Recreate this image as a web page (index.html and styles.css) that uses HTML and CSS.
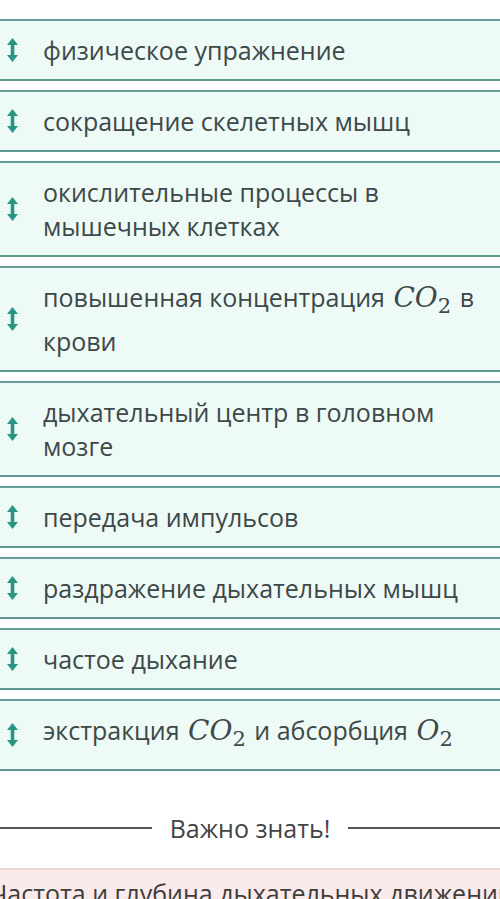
FILE: index.html
```html
<!DOCTYPE html>
<html lang="ru">
<head>
  <meta charset="UTF-8">
  <meta name="viewport" content="width=device-width, initial-scale=1.0">
  <title>Последовательность</title>
  <link rel="stylesheet" href="styles.css">
</head>
<body>
  <div class="order-list">
    <div class="order-item">
      <span class="handle"><svg width="11" height="24" viewBox="0 0 11 24"><path d="M5.5 0 L11 7 H7.3 V17 H11 L5.5 24 L0 17 H3.7 V7 H0 Z"/></svg></span>
      <span class="label">физическое упражнение</span>
    </div>
    <div class="order-item">
      <span class="handle"><svg width="11" height="24" viewBox="0 0 11 24"><path d="M5.5 0 L11 7 H7.3 V17 H11 L5.5 24 L0 17 H3.7 V7 H0 Z"/></svg></span>
      <span class="label">сокращение скелетных мышц</span>
    </div>
    <div class="order-item">
      <span class="handle"><svg width="11" height="24" viewBox="0 0 11 24"><path d="M5.5 0 L11 7 H7.3 V17 H11 L5.5 24 L0 17 H3.7 V7 H0 Z"/></svg></span>
      <span class="label">окислительные процессы в мышечных клетках</span>
    </div>
    <div class="order-item">
      <span class="handle"><svg width="11" height="24" viewBox="0 0 11 24"><path d="M5.5 0 L11 7 H7.3 V17 H11 L5.5 24 L0 17 H3.7 V7 H0 Z"/></svg></span>
      <span class="label">повышенная концентрация <span class="math">CO<sub>2</sub></span> в крови</span>
    </div>
    <div class="order-item">
      <span class="handle"><svg width="11" height="24" viewBox="0 0 11 24"><path d="M5.5 0 L11 7 H7.3 V17 H11 L5.5 24 L0 17 H3.7 V7 H0 Z"/></svg></span>
      <span class="label">дыхательный центр в головном мозге</span>
    </div>
    <div class="order-item">
      <span class="handle"><svg width="11" height="24" viewBox="0 0 11 24"><path d="M5.5 0 L11 7 H7.3 V17 H11 L5.5 24 L0 17 H3.7 V7 H0 Z"/></svg></span>
      <span class="label">передача импульсов</span>
    </div>
    <div class="order-item">
      <span class="handle"><svg width="11" height="24" viewBox="0 0 11 24"><path d="M5.5 0 L11 7 H7.3 V17 H11 L5.5 24 L0 17 H3.7 V7 H0 Z"/></svg></span>
      <span class="label">раздражение дыхательных мышц</span>
    </div>
    <div class="order-item">
      <span class="handle"><svg width="11" height="24" viewBox="0 0 11 24"><path d="M5.5 0 L11 7 H7.3 V17 H11 L5.5 24 L0 17 H3.7 V7 H0 Z"/></svg></span>
      <span class="label">частое дыхание</span>
    </div>
    <div class="order-item">
      <span class="handle"><svg width="11" height="24" viewBox="0 0 11 24"><path d="M5.5 0 L11 7 H7.3 V17 H11 L5.5 24 L0 17 H3.7 V7 H0 Z"/></svg></span>
      <span class="label">экстракция <span class="math">CO<sub>2</sub></span> и абсорбция <span class="math">O<sub>2</sub></span></span>
    </div>
  </div>

  <div class="divider">
    <span class="divider-text">Важно знать!</span>
  </div>

  <div class="note">
    <p class="note-text">Частота и глубина дыхательных движений)</p>
  </div>
</body>
</html>
```

FILE: styles.css
```css
body {
  margin: 0;
  font-family: "Open Sans", "Noto Sans", sans-serif;
  color: #3d4848;
  background: #fff;
  overflow: hidden;
}

.order-list {
  display: flex;
  flex-direction: column;
  gap: 9px;
  padding-top: 19px;
}

.order-item {
  display: flex;
  align-items: center;
  background: #eefaf6;
  border-top: 2px solid #659d98;
  border-bottom: 2px solid #5f9792;
  padding: 12px 10px 12px 7px;
}

.handle {
  flex: none;
  width: 11px;
  height: 24px;
  margin-right: 25px;
}

.handle svg {
  display: block;
  fill: #2a9583;
}

.label {
  font-size: 25px;
  line-height: 34px;
}

.math {
  display: inline-block;
  font-family: "DejaVu Serif", "Liberation Serif", serif;
  font-style: italic;
  font-size: 28px;
  line-height: 34px;
  padding-bottom: 9px;
  margin: 0 2px;
}

.math sub {
  font-style: normal;
  font-size: 21px;
  vertical-align: -6px;
  line-height: 0;
}

.divider {
  display: flex;
  align-items: center;
  gap: 18px;
  margin-top: 40px;
}

.divider::before,
.divider::after {
  content: "";
  flex: 1;
  border-top: 2px solid #555;
}

.divider-text {
  font-size: 25px;
  color: #444;
}

.note {
  margin-top: 23px;
  background: #fbeaea;
  border-top: 2px solid #f0d2d2;
  height: 60px;
}

.note-text {
  margin: 6px 0 0 -10px;
  font-size: 25px;
  white-space: nowrap;
  color: #3d3d3d;
}
```
